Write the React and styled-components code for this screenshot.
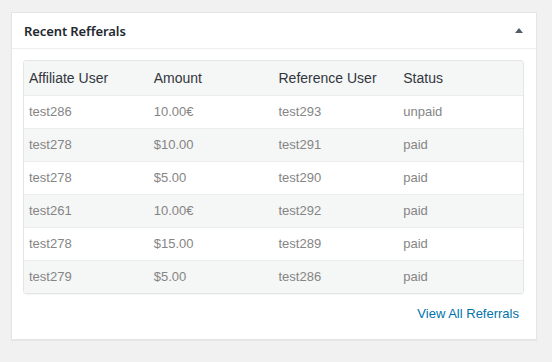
import React from "react";
import styled, { createGlobalStyle } from "styled-components";

const Global = createGlobalStyle`
  html, body { margin: 0; padding: 0; background: #f1f1f1; }
  body { font-family: "Liberation Sans", Arial, sans-serif; }
`;

const Page = styled.div`
  padding: 12px 15px 22px 11px;
`;

const Panel = styled.section`
  width: 524px;
  background: #fff;
  border: 1px solid #e5e5e5;
  box-shadow: 0 1px 1px rgba(0, 0, 0, 0.04);
`;

const Header = styled.header`
  height: 35px;
  display: flex;
  align-items: center;
  justify-content: space-between;
  padding: 0 12px;
  border-bottom: 1px solid #eee;
`;

const Title = styled.h2`
  margin: 0;
  font-family: "Noto Sans", "Liberation Sans", sans-serif;
  font-size: 13px;
  font-weight: 600;
  letter-spacing: -0.1px;
  color: #23282d;
`;

const Toggle = styled.span`
  width: 0;
  height: 0;
  margin-right: 1px;
  border-left: 4px solid transparent;
  border-right: 4px solid transparent;
  border-bottom: 5px solid #555d66;
`;

const Body = styled.div`
  padding: 11px 12px 16px 11px;
`;

const TableWrap = styled.div`
  border: 1px solid #e5e5e5;
  border-radius: 3px;
  overflow: hidden;
  box-shadow: 0 1px 1px rgba(0, 0, 0, 0.04);
`;

const Table = styled.table`
  width: 100%;
  border-collapse: collapse;
  table-layout: fixed;
`;

const HeadRow = styled.tr`
  height: 34px;
  background: #f5f6f6;
`;

const Th = styled.th`
  width: 25%;
  text-align: left;
  font-weight: 400;
  font-size: 14px;
  color: #32373c;
  padding: 0 5px;
`;

const Row = styled.tr`
  height: 33px;
  border-top: 1px solid #ececec;
  background: ${(p) => (p.$striped ? "#f5f6f6" : "#fff")};
`;

const Td = styled.td`
  font-size: 13px;
  color: #858585;
  padding: 0 5px;
`;

const Footer = styled.div`
  display: flex;
  justify-content: flex-end;
  padding: 10px 5px 0 0;
`;

const Link = styled.a`
  font-size: 13px;
  line-height: 19px;
  color: #0073aa;
  text-decoration: none;
`;

const rows = [
  ["test286", "10.00€", "test293", "unpaid"],
  ["test278", "$10.00", "test291", "paid"],
  ["test278", "$5.00", "test290", "paid"],
  ["test261", "10.00€", "test292", "paid"],
  ["test278", "$15.00", "test289", "paid"],
  ["test279", "$5.00", "test286", "paid"],
];

export default function App() {
  return (
    <>
      <Global />
      <Page>
        <Panel>
          <Header>
            <Title>Recent Refferals</Title>
            <Toggle />
          </Header>
          <Body>
            <TableWrap>
              <Table>
                <thead>
                  <HeadRow>
                    <Th>Affiliate User</Th>
                    <Th>Amount</Th>
                    <Th>Reference User</Th>
                    <Th>Status</Th>
                  </HeadRow>
                </thead>
                <tbody>
                  {rows.map((r, i) => (
                    <Row key={i} $striped={i % 2 === 1}>
                      {r.map((c, j) => (
                        <Td key={j}>{c}</Td>
                      ))}
                    </Row>
                  ))}
                </tbody>
              </Table>
            </TableWrap>
            <Footer>
              <Link href="#">View All Referrals</Link>
            </Footer>
          </Body>
        </Panel>
      </Page>
    </>
  );
}
